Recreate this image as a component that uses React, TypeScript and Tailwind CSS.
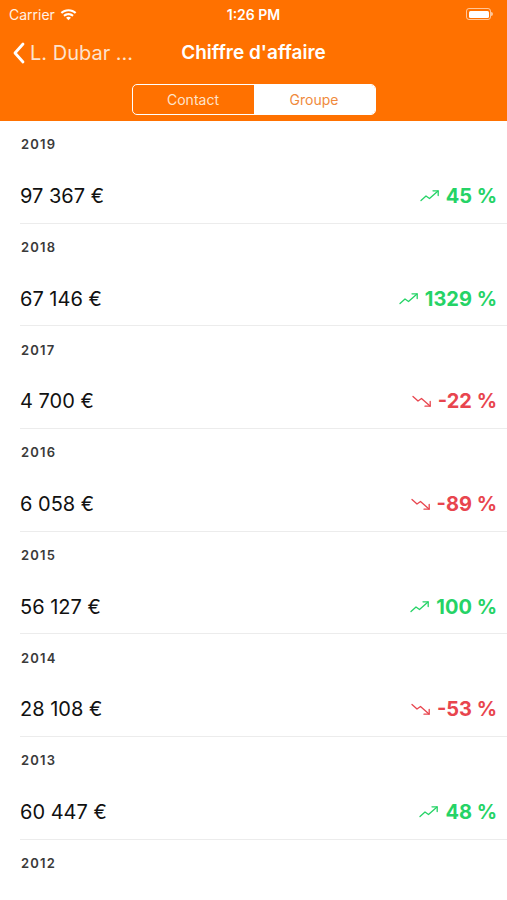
import React from 'react';

type Entry = { year: string; amount: string; pct: string; up: boolean };

const entries: Entry[] = [
  { year: '2019', amount: '97 367 €', pct: '45 %', up: true },
  { year: '2018', amount: '67 146 €', pct: '1329 %', up: true },
  { year: '2017', amount: '4 700 €', pct: '-22 %', up: false },
  { year: '2016', amount: '6 058 €', pct: '-89 %', up: false },
  { year: '2015', amount: '56 127 €', pct: '100 %', up: true },
  { year: '2014', amount: '28 108 €', pct: '-53 %', up: false },
  { year: '2013', amount: '60 447 €', pct: '48 %', up: true },
];

function TrendIcon({ up }: { up: boolean }) {
  if (up) {
    return (
      <svg width="20" height="14" viewBox="0 0 20 14" fill="none" stroke="currentColor" strokeWidth="1.3" strokeLinecap="round" strokeLinejoin="round">
        <path d="M1 11.5 L6 7 L9.5 9.5 L18 2" />
        <path d="M13 1.8 L18.2 1.8 L18.2 6.5" />
      </svg>
    );
  }
  return (
    <svg width="20" height="14" viewBox="0 0 20 14" fill="none" stroke="currentColor" strokeWidth="1.3" strokeLinecap="round" strokeLinejoin="round">
      <path d="M1 2.5 L6 7 L9.5 4.5 L18 12" />
      <path d="M13 12.2 L18.2 12.2 L18.2 7.5" />
    </svg>
  );
}

function Wifi() {
  return (
    <svg width="17" height="13" viewBox="0 0 16 12" fill="white">
      <path d="M8 1C5.1 1 2.5 2.1 0.6 3.9L2 5.4C3.6 3.9 5.7 3 8 3s4.4 0.9 6 2.4l1.4-1.5C13.5 2.1 10.9 1 8 1z" />
      <path d="M8 4.6c-1.9 0-3.6 0.7-4.9 1.9l1.4 1.5C5.4 7.1 6.6 6.6 8 6.6s2.6 0.5 3.5 1.4l1.4-1.5C11.6 5.3 9.9 4.6 8 4.6z" />
      <path d="M8 8.2c-0.9 0-1.7 0.3-2.3 0.9L8 11.5l2.3-2.4C9.7 8.5 8.9 8.2 8 8.2z" />
    </svg>
  );
}

export default function App() {
  return (
    <div className="w-[507px] h-[900px] overflow-hidden bg-white" style={{ fontFamily: 'Inter, "Liberation Sans", sans-serif' }}>
      <div className="bg-[#ff7100] h-[121px] flex flex-col">
        {/* status bar */}
        <div className="h-[28px] flex items-center justify-between px-[9px] text-white text-[14px]">
          <div className="flex items-center gap-[5px] w-[120px]">
            <span className="opacity-90">Carrier</span>
            <Wifi />
          </div>
          <span className="font-semibold">1:26 PM</span>
          <div className="w-[120px] flex justify-end pr-[5px]">
            <div className="flex items-center">
              <div className="w-[25px] h-[12px] rounded-[3px] border border-white/60 p-[1.5px]">
                <div className="w-full h-full bg-white rounded-[1.5px]" />
              </div>
              <div className="w-[1.5px] h-[4px] bg-white/60 rounded-r-sm" />
            </div>
          </div>
        </div>
        {/* nav bar */}
        <div className="h-[48px] flex items-center relative text-white pt-[2px]">
          <div className="flex items-center pl-[12px] gap-[4px]">
            <svg width="14" height="22" viewBox="0 0 14 22" fill="none" stroke="white" strokeWidth="2.8" strokeLinecap="round" strokeLinejoin="round">
              <path d="M11 2 L3 11 L11 20" />
            </svg>
            <span className="text-[20px] text-[#fde3cc]">L. Dubar ...</span>
          </div>
          <span className="absolute left-0 right-0 text-center text-[19px] font-semibold pointer-events-none">Chiffre d'affaire</span>
        </div>
        {/* segmented control */}
        <div className="flex justify-center mt-[8px]">
          <div className="w-[244px] h-[31px] border border-white rounded-[5px] flex overflow-hidden text-[14px]">
            <div className="flex-1 flex items-center justify-center text-[#fde3cc]">Contact</div>
            <div className="flex-1 flex items-center justify-center bg-white text-[#f08a3c]">Groupe</div>
          </div>
        </div>
      </div>

      <div className="flex flex-col">
        {entries.map((e) => (
          <div key={e.year} className="flex flex-col h-[102.7px]">
            <div className="h-[48px] flex items-center pl-[21px] text-[13px] font-semibold tracking-[1.2px] text-[#3a3a3a]">{e.year}</div>
            <div className="flex-1 ml-[20px] flex items-center justify-between pr-[10px] border-b border-[#ececec]">
              <span className="text-[20px] text-[#111]">{e.amount}</span>
              <div className={`flex items-center gap-[6px] ${e.up ? 'text-[#25d366]' : 'text-[#e8454e]'}`}>
                <TrendIcon up={e.up} />
                <span className="text-[20px] font-bold">{e.pct}</span>
              </div>
            </div>
          </div>
        ))}
        <div className="h-[48px] flex items-center pl-[21px] text-[13px] font-semibold tracking-[1.2px] text-[#3a3a3a]">2012</div>
      </div>
    </div>
  );
}
